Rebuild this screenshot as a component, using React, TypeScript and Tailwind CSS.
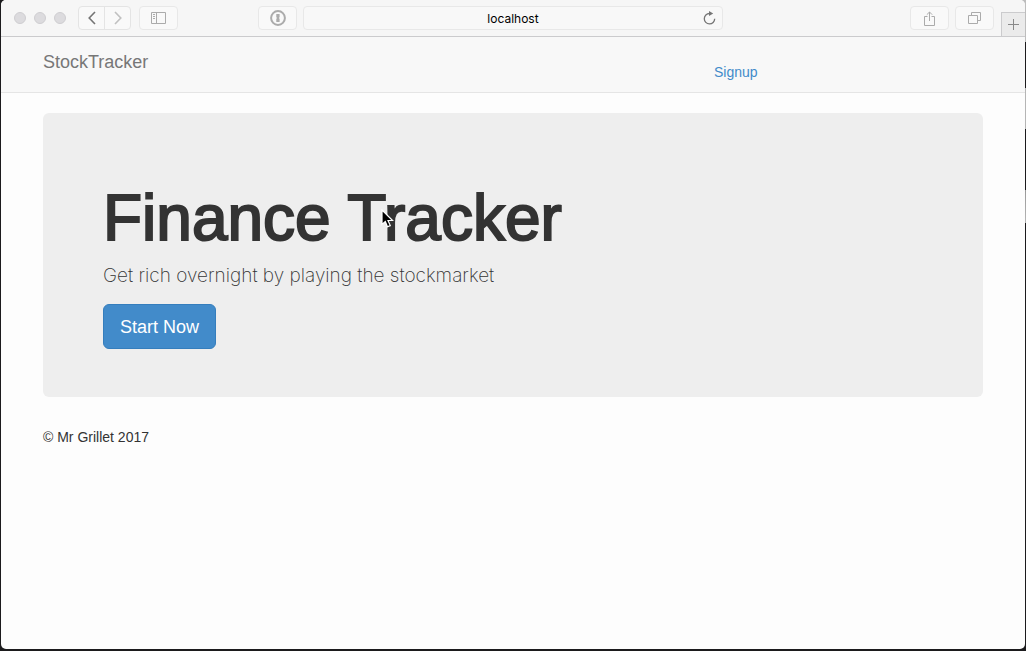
import React from "react";

const toolButton =
  "flex h-6 w-[39px] shrink-0 items-center justify-center rounded border border-[#e8e8e8] bg-[#f9f9f9] text-[#ababab]";

function BrowserToolbar() {
  return (
    <div className="grid h-[37px] shrink-0 grid-cols-[1fr_minmax(0,420px)_1fr] border-b border-[#cbcbcd] bg-[#f6f6f6]">
      <div className="flex items-center pr-1.5 pl-[13px]">
        <div className="flex shrink-0 gap-2">
          <span className="size-3 rounded-full border border-[#cfced1] bg-[#dcdbde]" />
          <span className="size-3 rounded-full border border-[#cfced1] bg-[#dcdbde]" />
          <span className="size-3 rounded-full border border-[#cfced1] bg-[#dcdbde]" />
        </div>
        <div className="ml-3 flex h-6 w-[53px] shrink-0 rounded border border-[#e4e4e4] bg-[#f9f9f9]">
          <button aria-label="Back" className="flex flex-1 items-center justify-center border-r border-[#e4e4e4] text-[#747474]">
            <svg width="8" height="14" viewBox="0 0 8 14" fill="none" stroke="currentColor" strokeWidth="1.6"><path d="M7 1 1.2 7 7 13" /></svg>
          </button>
          <button aria-label="Forward" className="flex flex-1 items-center justify-center text-[#c0c0c0]">
            <svg width="8" height="14" viewBox="0 0 8 14" fill="none" stroke="currentColor" strokeWidth="1.6"><path d="M1 1 6.8 7 1 13" /></svg>
          </button>
        </div>
        <button aria-label="Show sidebar" className={`${toolButton} ml-2`}>
          <svg width="15" height="12" viewBox="0 0 15 12" fill="none" stroke="currentColor"><path d="M.5.5h14v11H.5zM5.5.5v11M2 2.5h2M2 4.5h2M2 6.5h2" /></svg>
        </button>
        <button aria-label="Password manager" className={`${toolButton} ml-auto`}>
          <svg width="16" height="16" viewBox="0 0 16 16" fill="none">
            <circle cx="8" cy="8" r="6.9" stroke="currentColor" strokeWidth="2" />
            <path fill="currentColor" d="M6.3 4h3.3v3.3l-.8.7.8.7V12H6.3V8.8l.8-.8-.8-.7z" />
          </svg>
        </button>
      </div>
      <div className="flex items-center">
        <div className="relative flex h-6 flex-1 items-center rounded border border-[#e8e8e8] bg-[#f8f8f8]">
          <input
            aria-label="Address"
            defaultValue="localhost"
            className="h-full w-full bg-transparent text-center font-['Inter',sans-serif] text-xs text-black outline-none"
          />
          <button aria-label="Reload" className="absolute right-1.5 text-[#757575]">
            <svg width="13" height="14" viewBox="0 0 13 14" fill="none">
              <path d="M7.5 2.5h-1a5.2 5.2 0 1 0 5.2 5.3" stroke="currentColor" strokeWidth="1.3" />
              <path d="M6 0v5l4.2-2.5z" fill="currentColor" />
            </svg>
          </button>
        </div>
      </div>
      <div className="flex items-center justify-end">
        <button aria-label="Share" className={toolButton}>
          <svg width="11" height="15" viewBox="0 0 11 15" fill="none" stroke="currentColor"><path d="M3.5 5.5h-3v9h10v-9h-3M5.5 10V1M2.8 3.7 5.5 1l2.7 2.7" /></svg>
        </button>
        <button aria-label="Show all tabs" className={`${toolButton} ml-1.5`}>
          <svg width="13" height="13" viewBox="0 0 13 13" fill="none" stroke="currentColor"><path d="M.5 3.5h9v8h-9zM3.5 3.5v-3h9v8h-3" /></svg>
        </button>
        <button aria-label="New tab" className="ml-[7px] flex h-6 w-6 items-center justify-center self-end border-t border-l border-[#cbcbcd] bg-[#ebebeb] text-[#888888]">
          <svg width="11" height="11" viewBox="0 0 11 11" stroke="currentColor"><path d="M5.5 0v11M0 5.5h11" /></svg>
        </button>
      </div>
    </div>
  );
}

export default function App() {
  return (
    <div className="flex min-h-screen bg-[#1c1b1d] bg-[linear-gradient(#bdbdbd_42px,#1c1b1d_42px,#1c1b1d_88px,#b5b5b5_88px,#b5b5b5_129px,#1c1b1d_129px,#1c1b1d_190px,#999999_190px,#b5b5b5_223px,#1c1b1d_223px)] bg-[length:50%_100%] bg-right bg-no-repeat px-px pb-0.5 font-['Liberation_Sans',Arial,sans-serif] text-[#333333]">
      <div className="relative flex min-w-0 flex-1 flex-col overflow-hidden rounded-[5px] bg-[#fdfdfd]">
        <BrowserToolbar />
        <nav className="h-14 shrink-0 border-b border-[#e5e5e5] bg-[#f8f8f8] px-6">
          <div className="mx-auto flex max-w-[940px] items-start justify-between">
            <a href="#" className="pt-[15px] text-lg leading-5 text-[#777777]">StockTracker</a>
            <div className="w-[269px] pt-[25px]">
              <a href="#signup" className="block w-fit text-sm leading-5 text-[#428bca]">Signup</a>
            </div>
          </div>
        </nav>
        <div className="px-6 pt-5">
          <main className="mx-auto max-w-[940px] rounded-md bg-[#eeeeee] px-[60px] pt-[70px] pb-12">
            <h1 className="text-[64px] leading-[70px] [-webkit-text-stroke:2px_#333333]">Finance Tracker</h1>
            <p className="mt-2 font-['Inter',sans-serif] text-[19px] leading-[29px] font-extralight">
              Get rich overnight by playing the stockmarket
            </p>
            <button className="mt-3.5 h-[45px] rounded-md border border-[#357ebd] bg-[#428bca] px-4 text-lg text-white">
              Start Now
            </button>
          </main>
          <footer className="mx-auto max-w-[940px] pt-[30px] text-sm leading-5">© Mr Grillet 2017</footer>
        </div>
        <svg aria-hidden="true" className="absolute top-[209px] left-[380px]" width="13" height="20" viewBox="0 0 13 20">
          <path d="M1 1v14.5l3.3-3 2.2 5.3 2.8-1.2L7 11.5h4.6z" fill="#000" stroke="#fff" strokeWidth="1.2" />
        </svg>
      </div>
    </div>
  );
}
